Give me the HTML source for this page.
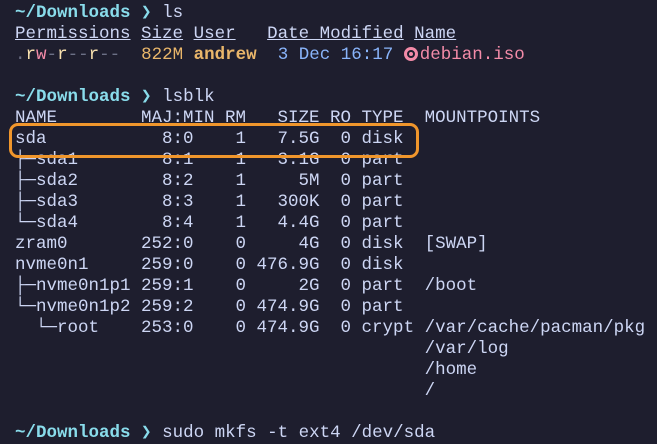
<!DOCTYPE html>
<html><head><meta charset="utf-8"><style>
html,body{margin:0;padding:0;background:#1e1e2e;width:657px;height:442px;overflow:hidden}
pre{margin:0;position:absolute;left:15px;top:3px;font-family:"Liberation Mono","DejaVu Sans Mono",monospace;font-size:17.5px;line-height:21px;color:#cdd6f4}
.p{color:#89dceb;font-weight:bold}
.u{text-decoration:underline}
.g{color:#6c7086}.y{color:#f9e2af}.r{color:#f38ba8}.o{color:#e9b66a}.b{color:#89b4fa}
.ic{display:inline-block;width:14px;height:14px;border-radius:50%;background:#f38ba8;vertical-align:-2px;position:relative;margin-right:2px}
.ic:after{content:"";position:absolute;left:3px;top:3px;width:4px;height:4px;border:2px solid #1e1e2e;border-radius:50%}
.box{position:absolute;left:9px;top:123px;width:404px;height:29px;border:3px solid #f0962c;border-radius:9px}
</style></head><body>
<pre><span class="p">~/Downloads ❯</span> ls
<span class="u">Permissions</span> <span class="u">Size</span> <span class="u">User</span>   <span class="u">Date Modified</span> <span class="u">Name</span>
<span class="g">.</span><span class="y">r</span><span class="r">w</span><span class="g">-</span><span class="y">r</span><span class="g">--</span><span class="y">r</span><span class="g">--</span>  <span class="o">822M</span> <span class="o" style="font-weight:bold">andrew</span>  <span class="b">3 Dec 16:17</span> <span class="ic"></span><span class="r">debian.iso</span>

<span class="p">~/Downloads ❯</span> lsblk
NAME        MAJ:MIN RM   SIZE RO TYPE  MOUNTPOINTS
sda           8:0    1   7.5G  0 disk
├─sda1        8:1    1   3.1G  0 part
├─sda2        8:2    1     5M  0 part
├─sda3        8:3    1   300K  0 part
└─sda4        8:4    1   4.4G  0 part
zram0       252:0    0     4G  0 disk  [SWAP]
nvme0n1     259:0    0 476.9G  0 disk
├─nvme0n1p1 259:1    0     2G  0 part  /boot
└─nvme0n1p2 259:2    0 474.9G  0 part
  └─root    253:0    0 474.9G  0 crypt /var/cache/pacman/pkg
                                       /var/log
                                       /home
                                       /

<span class="p">~/Downloads ❯</span> sudo mkfs -t ext4 /dev/sda</pre>
<div class="box"></div>
</body></html>
